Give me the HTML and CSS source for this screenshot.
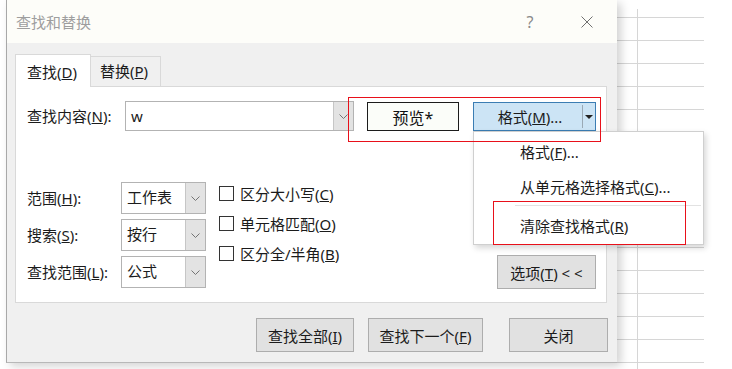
FILE: index.html
```html
<!DOCTYPE html>
<html>
<head>
    <meta charset="utf-8" />
    <title>查找和替换</title>
    <link rel="stylesheet" href="styles.css">
</head>
<body>
<div class="desk">
    <div class="dialog">
        <div class="titlebar">
            <span class="title">查找和替换</span>
            <span class="help">?</span>
            <svg class="close" width="12" height="12" viewBox="0 0 12 12">
                <path d="M0.5 0.5 L11.5 11.5 M11.5 0.5 L0.5 11.5" stroke="#707070" stroke-width="1" fill="none"/>
            </svg>
        </div>
        <div class="dlg-body">
            <div class="tabs">
                <div class="tab active">查找(<u>D</u>)</div>
                <div class="tab">替换(<u>P</u>)</div>
            </div>
            <div class="panel">
                <div class="find-row">
                    <label class="lbl-find">查找内容(<u>N</u>):</label>
                    <div class="combo combo-find">
                        <span class="val">w</span>
                        <span class="drop"><svg class="chev" width="9" height="5" viewBox="0 0 9 5"><path d="M0.5 0.5 L4.5 4.5 L8.5 0.5" fill="none" stroke="#747474"/></svg></span>
                    </div>
                    <button class="preview">预览*</button>
                    <div class="split">
                        <button class="split-main">格式(<u>M</u>)...</button>
                        <span class="split-sep"></span>
                        <span class="split-arrow"><i class="tri"></i></span>
                        <div class="menu">
                            <div class="menu-item">格式(<u>F</u>)...</div>
                            <div class="menu-item">从单元格选择格式(<u>C</u>)...</div>
                            <div class="menu-sep"></div>
                            <div class="menu-item last">清除查找格式(<u>R</u>)</div>
                        </div>
                    </div>
                </div>

                <div class="opts">
                    <div class="fields">
                        <label>范围(<u>H</u>):</label>
                        <div class="combo">
                            <span class="val">工作表</span>
                            <span class="drop"><svg class="chev" width="9" height="5" viewBox="0 0 9 5"><path d="M0.5 0.5 L4.5 4.5 L8.5 0.5" fill="none" stroke="#747474"/></svg></span>
                        </div>
                        <label>搜索(<u>S</u>):</label>
                        <div class="combo">
                            <span class="val">按行</span>
                            <span class="drop"><svg class="chev" width="9" height="5" viewBox="0 0 9 5"><path d="M0.5 0.5 L4.5 4.5 L8.5 0.5" fill="none" stroke="#747474"/></svg></span>
                        </div>
                        <label>查找范围(<u>L</u>):</label>
                        <div class="combo">
                            <span class="val">公式</span>
                            <span class="drop"><svg class="chev" width="9" height="5" viewBox="0 0 9 5"><path d="M0.5 0.5 L4.5 4.5 L8.5 0.5" fill="none" stroke="#747474"/></svg></span>
                        </div>
                    </div>
                    <div class="checks">
                        <div class="check"><span class="box"></span><span>区分大小写(<u>C</u>)</span></div>
                        <div class="check"><span class="box"></span><span>单元格匹配(<u>O</u>)</span></div>
                        <div class="check"><span class="box"></span><span>区分全/半角(<u>B</u>)</span></div>
                    </div>
                    <button class="btn btn-opt">选项(<u>T</u>) &lt; &lt;</button>
                </div>
            </div>
            <div class="actions">
                <button class="btn btn-all">查找全部(<u>I</u>)</button>
                <button class="btn btn-next">查找下一个(<u>F</u>)</button>
                <button class="btn btn-close">关闭</button>
            </div>
        </div>
    </div>
    <div class="sheet"></div>

    <!-- 红框标注 -->
    <div class="mark mark-a"></div>
    <div class="mark mark-b"></div>
</div>
</body>
</html>
```

FILE: styles.css
```css
* {
    margin: 0;
    padding: 0;
    box-sizing: border-box;
}
body {
    font-family: "Noto Sans", "Noto Sans CJK SC", sans-serif;
    font-size: 15px;
    color: #1b1b1b;
    background: #fff;
}
.desk {
    position: relative;
    display: flex;
    width: 732px;
    height: 369px;
    padding-left: 6px;
    overflow: hidden;
}
.dialog {
    position: relative;
    z-index: 1;
    flex-shrink: 0;
    width: 611px;
    height: 363px;
    background: #f0f0f0;
    border-left: 1px solid #a8a8a8;
    border-bottom: 1px solid #b8b8b8;
    box-shadow: 4px 3px 9px rgba(0, 0, 0, .18);
}
.titlebar {
    display: flex;
    align-items: center;
    height: 43px;
    padding-left: 9px;
    background: #fdfdf9;
}
.title {
    color: #9e9e9e;
}
.help {
    margin-left: auto;
    width: 20px;
    margin-right: 41px;
    text-align: center;
    color: #8a8a8a;
    font-size: 16px;
}
.close {
    margin-right: 24px;
}
.dlg-body {
    padding: 11px 10px 0 8px;
}
.tabs {
    display: flex;
    align-items: flex-end;
    height: 32px;
}
.tab {
    width: 70px;
    height: 30px;
    padding-left: 9px;
    line-height: 29px;
    background: #f0f0f0;
    border: 1px solid #d9d9d9;
    border-left: none;
    border-bottom: none;
}
.tab.active {
    position: relative;
    width: 76px;
    height: 33px;
    margin-bottom: -1px;
    padding-left: 11px;
    line-height: 34px;
    background: #fff;
    border-left: 1px solid #d9d9d9;
}
.panel {
    background: #fff;
    border: 1px solid #d9d9d9;
    padding: 14px 10px 13px 11px;
}
.find-row {
    display: flex;
    align-items: flex-start;
    height: 30px;
}
.lbl-find {
    width: 98px;
    line-height: 30px;
}
.combo {
    display: flex;
    height: 30px;
    background: #fff;
    border: 1px solid #b3b3b3;
}
.combo-find {
    width: 229px;
}
.combo .val {
    flex: 1;
    padding-left: 5px;
    line-height: 28px;
}
.combo .drop {
    display: flex;
    align-items: center;
    justify-content: center;
    width: 20px;
    background: #e3e3e3;
    border-left: 1px solid #c6c6c6;
}
.preview {
    width: 92px;
    height: 29px;
    margin: 1px 0 0 13px;
    font-family: inherit;
    font-size: 16px;
    color: #111;
    background: #fbfdf9;
    border: 1px solid #1c1c1c;
}
.split {
    position: relative;
    display: flex;
    width: 123px;
    height: 29px;
    margin: 1px 0 0 14px;
    background: #cce4f5;
    border: 1px solid #3b7db3;
}
.split-main {
    flex: 1;
    font: inherit;
    color: inherit;
    background: none;
    border: none;
    padding-left: 4px;
}
.split-sep {
    width: 1px;
    margin: 2px 0;
    background: #9aa9b5;
}
.split-arrow {
    display: flex;
    align-items: center;
    justify-content: center;
    width: 12px;
}
.tri {
    width: 0;
    height: 0;
    border-left: 4px solid transparent;
    border-right: 4px solid transparent;
    border-top: 4px solid #222;
}
.menu {
    position: absolute;
    top: calc(100% + 1px);
    left: -1px;
    z-index: 5;
    width: 231px;
    padding-top: 3px;
    background: #fff;
    border: 1px solid #cfcfcf;
    box-shadow: 2px 3px 6px rgba(0, 0, 0, .16);
}
.menu-item {
    height: 35px;
    line-height: 35px;
    padding-left: 46px;
    white-space: nowrap;
}
.menu-item.last {
    margin-top: 3px;
}
.menu-sep {
    height: 1px;
    margin: 0 2px 0 41px;
    background: #e2e2e2;
}
.opts {
    display: flex;
    height: 107px;
    margin-top: 51px;
}
.fields {
    display: grid;
    grid-template-columns: 94px 85px;
    grid-auto-rows: 32px;
    row-gap: 5px;
}
.fields label {
    line-height: 32px;
}
.fields .combo {
    height: 32px;
}
.checks {
    display: flex;
    flex-direction: column;
    gap: 8px;
    margin-left: 13px;
}
.check {
    display: flex;
    align-items: center;
    gap: 6px;
    height: 22px;
    white-space: nowrap;
}
.box {
    width: 15px;
    height: 15px;
    background: #fff;
    border: 1px solid #333;
}
.btn {
    height: 34px;
    font: inherit;
    color: inherit;
    background: #e1e1e1;
    border: 1px solid #adadad;
}
.btn-opt {
    align-self: flex-end;
    width: 99px;
    margin-left: auto;
}
.actions {
    display: flex;
    justify-content: flex-end;
    margin-top: 15px;
    margin-right: -1px;
}
.btn-all {
    width: 98px;
    margin-right: 14px;
}
.btn-next {
    width: 115px;
    margin-right: 26px;
}
.btn-close {
    width: 99px;
}
.sheet {
    flex-shrink: 0;
    width: 87px;
    margin-top: 9px;
    background-image:
        linear-gradient(to right, transparent 20px, #d6d6d6 20px, #d6d6d6 21px, transparent 21px),
        linear-gradient(to bottom, #d6d6d6 1px, transparent 1px);
    background-size: 100% 100%, 100% 23px;
    background-position: 0 0, 0 8px;
    background-repeat: no-repeat, repeat;
}
.mark {
    position: absolute;
    z-index: 10;
    border: 1px solid #e8101a;
    pointer-events: none;
}
.mark-a {
    left: 348px;
    top: 97px;
    width: 253px;
    height: 45px;
}
.mark-b {
    left: 493px;
    top: 201px;
    width: 193px;
    height: 44px;
}
```
